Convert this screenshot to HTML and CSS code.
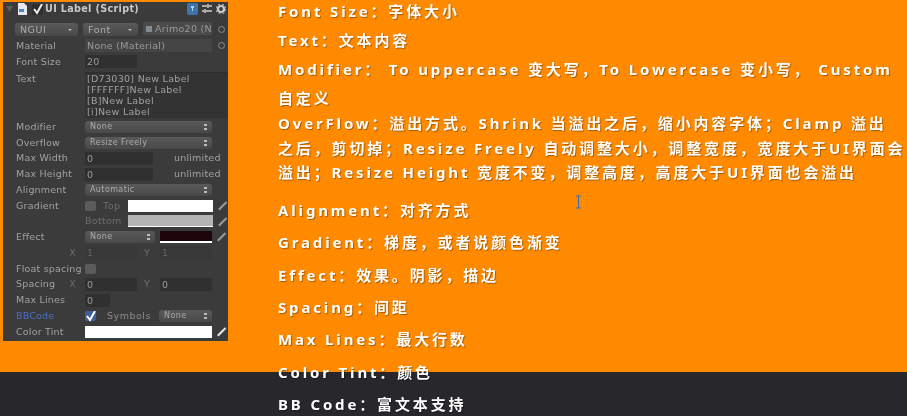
FILE: index.html
```html
<!DOCTYPE html>
<html lang="zh">
<head>
<meta charset="utf-8">
<title>UI Label</title>
<link rel="stylesheet" href="styles.css">
</head>
<body>
<main class="stage">
  <section class="inspector">
    <header class="head">
      <svg class="ico-fold" width="8" height="8" viewBox="0 0 8 8"><path d="M0 1h7L3.5 7z" fill="#5d5d5d"/></svg>
      <svg class="ico-doc" width="9" height="12" viewBox="0 0 9 12"><path d="M0 0h6l3 3v9H0z" fill="#e8e8ee"/><rect x="1" y="6" width="5" height="3" fill="#4a86c8"/></svg>
      <span class="check small"><svg width="11" height="11" viewBox="0 0 11 11"><path d="M2 5l3 4 5-9" fill="none" stroke="#eee" stroke-width="2"/></svg></span>
      <b class="title">UI Label (Script)</b>
      <span class="head-icons">
        <svg width="11" height="12" viewBox="0 0 11 12"><rect width="11" height="12" rx="2" fill="#3f74a8"/><path d="M4 3h3v2H6v3H5V5H4z" fill="#b7d2ec"/></svg>
        <svg width="10" height="10" viewBox="0 0 10 10"><path d="M0 2h10M0 7h10" stroke="#aaa" stroke-width="2"/><path d="M6 0v4M3 5v4" stroke="#aaa" stroke-width="2"/></svg>
        <svg width="10" height="10" viewBox="0 0 10 10"><circle cx="5" cy="5" r="3" fill="none" stroke="#ccc" stroke-width="2.2"/><circle cx="5" cy="5" r="5" fill="none" stroke="#ccc" stroke-width="1" stroke-dasharray="2 2"/></svg>
      </span>
    </header>

    <div class="row font-row">
      <span class="pop w-ngui">NGUI<i class="tri"></i></span>
      <span class="pop w-font">Font<i class="tri"></i></span>
      <span class="field w-ref"><i class="swatch-ico"></i>Arimo20 (N</span>
      <i class="dot"></i>
    </div>
    <div class="row"><label>Material</label><span class="field w-mat">None (Material)</span><i class="dot"></i></div>
    <div class="row"><label>Font Size</label><span class="field w-size">20</span></div>
    <div class="row text-row"><label>Text</label>
      <div class="area">[D73030] New Label<br>[FFFFFF]New Label<br>[B]New Label<br>[i]New Label</div>
    </div>
    <div class="row"><label>Modifier</label><span class="pop w-full thin">None<i class="updown"></i></span></div>
    <div class="row"><label>Overflow</label><span class="pop w-full thin">Resize Freely<i class="updown"></i></span></div>
    <div class="row"><label>Max Width</label><span class="field w-num">0</span><span class="unl">unlimited</span></div>
    <div class="row"><label>Max Height</label><span class="field w-num">0</span><span class="unl">unlimited</span></div>
    <div class="row"><label>Alignment</label><span class="pop w-full thin">Automatic<i class="updown"></i></span></div>
    <div class="row"><label>Gradient</label><span class="check"></span><span class="dim top-l">Top</span><span class="color white"></span><i class="pick"></i></div>
    <div class="row"><label></label><span class="dim bottom-l">Bottom</span><span class="color grey"></span><i class="pick"></i></div>
    <div class="row"><label>Effect</label><span class="pop w-effect thin">None<i class="updown"></i></span><span class="color black"></span><i class="pick"></i></div>
    <div class="row"><label class="axis dim">X</label><span class="field w-xy faded">1</span><span class="axis-y dim">Y</span><span class="field w-xy2 faded">1</span></div>
    <div class="row"><label>Float spacing</label><span class="check"></span></div>
    <div class="row"><label class="split">Spacing<em>X</em></label><span class="field w-xy">0</span><span class="axis-y dim">Y</span><span class="field w-xy2">0</span></div>
    <div class="row"><label>Max Lines</label><span class="field w-lines">0</span></div>
    <div class="row"><label class="blue">BBCode</label><span class="check on"><svg width="11" height="11" viewBox="0 0 11 11"><path d="M2 5l3 4 5-9" fill="none" stroke="#fff" stroke-width="2"/></svg></span><span class="sym">Symbols</span><span class="pop w-sym thin">None<i class="updown"></i></span></div>
    <div class="row"><label>Color Tint</label><span class="color tint"></span><i class="pick bright"></i></div>
  </section>

  <article class="notes">
    <p class="n1">Font Size：字体大小</p>
    <p class="n2">Text：文本内容</p>
    <p class="n2b">Modifier： To uppercase 变大写，To Lowercase 变小写， Custom<br>自定义</p>
    <p class="n3">OverFlow：溢出方式。Shrink 当溢出之后，缩小内容字体；Clamp 溢出<br>之后，剪切掉；Resize Freely 自动调整大小，调整宽度，宽度大于UI界面会<br>溢出；Resize Height 宽度不变，调整高度，高度大于UI界面也会溢出</p>
    <p class="n4">Alignment：对齐方式</p>
    <p class="n5">Gradient：梯度，或者说颜色渐变</p>
    <p class="n5">Effect：效果。阴影，描边</p>
    <p class="n5">Spacing：间距</p>
    <p class="n5">Max Lines：最大行数</p>
    <p class="n5">Color Tint：颜色</p>
    <p class="n5">BB Code：富文本支持</p>
  </article>
  <svg class="cursor" width="7" height="14" viewBox="0 0 7 14"><path d="M1 1h5M3.5 1v12M1 13h5" fill="none" stroke="#3f6fb0" stroke-width="1.2"/></svg>
</main>
</body>
</html>
```
FILE: styles.css
```css
* { box-sizing: border-box; }
html, body { margin: 0; height: 416px; overflow: hidden; }
body { background: linear-gradient(#ff8a00 372px, #28282c 372px); }
.stage { position: relative; display: flex; align-items: flex-start; height: 416px; padding-left: 3px; }

/* inspector */
.inspector {
  width: 225px; height: 339px; margin-top: 2px; background: #3b3b3b; color: #a2a2a2;
  font: 10px/12px "DejaVu Sans", sans-serif; flex: none;
  filter: blur(.4px); overflow: hidden;
}
.head { display: flex; align-items: center; height: 14px; padding-left: 3px; position: relative; }
.ico-fold { margin-right: 4px; }
.ico-doc { margin-right: 5px; }
.title { color: #c8c8c8; font-size: 9.6px; letter-spacing: .35px; margin-left: 1px; }
.head-icons { position: absolute; left: 184px; top: 1px; display: flex; gap: 4px; align-items: center; }
.row { display: flex; align-items: center; height: 15.75px; padding-left: 13px; white-space: nowrap; }
.row label { width: 69px; flex: none; font-size: 9.5px; letter-spacing: .2px; }
.font-row { height: 17px; margin: 5px 0 0; padding-left: 12px; }
.pop {
  display: flex; align-items: center; height: 13px; background: linear-gradient(#5a5a5a, #484848);
  border-radius: 3px; padding-left: 5px; color: #ababab; position: relative; font-size: 9.5px;
}
.pop.thin { font-size: 8px; letter-spacing: .4px; height: 12px; }
.w-ngui { width: 63px; margin-right: 5px; letter-spacing: .5px; }
.w-font { width: 55px; margin-right: 5px; letter-spacing: .5px; }
.tri { position: absolute; right: 6px; top: 6px; border: 2.5px solid transparent; border-top-color: #bbb; border-bottom: 0; }
.updown { position: absolute; right: 5px; top: 3px; width: 3px; height: 6px; border-top: 2px solid #bbb; border-bottom: 2px solid #bbb; }
.field { display: block; height: 13px; background: #303030; color: #9a9a9a; padding-left: 2px; font-size: 9.5px; line-height: 13px; letter-spacing: .3px; }
.w-ref { width: 69px; background: #4a4a4a; overflow: hidden; padding-left: 3px; margin-top: -3px; }
.swatch-ico { display: inline-block; width: 6px; height: 6px; background: #7f8c96; margin-right: 3px; }
.w-mat { width: 127px; background: #454545; }
.dot { width: 7px; height: 7px; border: 1.5px solid #888; border-radius: 50%; margin-left: 6px; }
.w-size { width: 52px; }
.text-row { height: 49.5px; align-items: flex-start; padding-top: 3px; }
.area {
  flex: 1; height: 46px; margin-top: -1px; background: #333; border-top: 1px solid #2c2c2c; padding: 0 0 0 2px;
  font-size: 9.5px; line-height: 11.3px; letter-spacing: .3px; color: #a0a0a0;
}
.w-full { width: 127px; }
.w-num { width: 68px; }
.unl { margin-left: 21px; font-size: 9.5px; letter-spacing: .2px; }
.check {
  display: inline-block; width: 11px; height: 10px; background: #5b5b5b; border-radius: 2px; flex: none;
}
.check.small { width: 11px; height: 11px; background: #2e2e2e; margin-right: 1px; display: flex; }
.check.on { background: #3f5f9c; display: flex; }
.dim { color: #6d6d6d; font-size: 9.5px; }
.top-l { margin-left: 7px; width: 25px; letter-spacing: .5px; }
.bottom-l { width: 43px; letter-spacing: .3px; }
.color { display: block; height: 12px; }
.white { width: 85px; background: #fff; }
.grey { width: 85px; background: #b4b4b4; border-bottom: 1px solid #fff; }
.black { width: 52px; background: #1c0408; border-bottom: 2px solid #fff; margin-left: 5px; }
.w-effect { width: 70px; }
.pick { width: 11px; height: 1.5px; background: #999; transform: rotate(-45deg); margin-left: 4px; flex: none; }
.pick.bright { background: #e8e8e8; }
.axis { text-align: right; padding-right: 9px; }
.faded { background: #383838; color: #666; }
.w-xy { width: 52px; }
.w-xy2 { width: 52px; }
.axis-y { width: 23px; text-align: center; padding-right: 3px; }
.split { display: flex; justify-content: space-between; padding-right: 9px; }
.split em { font-style: normal; color: #6d6d6d; }
.w-lines { width: 25px; }
.blue { color: #4a70c8; }
.sym { margin-left: 11px; width: 52px; font-size: 9.5px; letter-spacing: .5px; color: #8c8c8c; flex: none; }
.w-sym { width: 53px; }
.tint { width: 127px; background: #fff; }

/* notes */
.notes {
  margin-left: 50px; margin-top: -1px; color: #fff; flex: none; white-space: nowrap;
  font: 700 15px/24.5px "Noto Sans", "Noto Sans CJK SC", sans-serif; letter-spacing: 2.85px;
  text-shadow: 1px 1px 1px rgba(0,0,0,.35); filter: blur(.3px);
}
.notes p { margin: 0; }
.notes .n2 { margin-top: 2.25px; line-height: 29px; }
.notes .n2b { margin-top: 0; line-height: 29px; }
.notes .n3 { margin-top: -1.75px; }
.notes .n4 { margin-top: 13.5px; }
.notes .n5 { margin-top: 7.85px; }
.cursor { position: absolute; left: 575px; top: 195px; }
```
